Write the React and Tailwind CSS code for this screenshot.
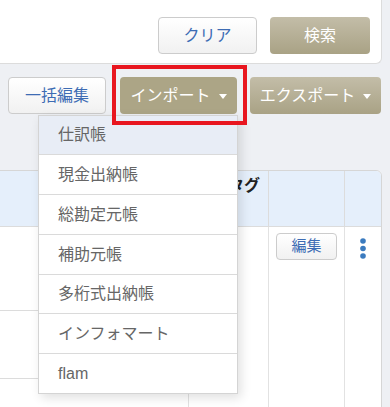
import React from "react";

const font = { fontFamily: '"Liberation Sans", "Noto Sans CJK JP", sans-serif' };

const items = [
  { label: "仕訳帳", h: "h-[39px]", active: true },
  { label: "現金出納帳", h: "h-[40px]" },
  { label: "総勘定元帳", h: "h-[40px]" },
  { label: "補助元帳", h: "h-[40px]" },
  { label: "多桁式出納帳", h: "h-[39px]" },
  { label: "インフォマート", h: "h-[40px]" },
  { label: "flam", h: "h-[39px]" },
];

const Caret = () => (
  <span className="inline-block w-0 h-0 border-l-[4px] border-r-[4px] border-t-[5px] border-l-transparent border-r-transparent border-t-white ml-[8px] mt-[2px]" />
);

const Dots = () => (
  <svg width="8" height="22" viewBox="0 0 8 22">
    <circle cx="4" cy="3" r="2.8" fill="#3b7bbf" />
    <circle cx="4" cy="10.5" r="2.8" fill="#3b7bbf" />
    <circle cx="4" cy="18" r="2.8" fill="#3b7bbf" />
  </svg>
);

const App = () => {
  const lightBtn =
    "flex items-center justify-center h-[37px] rounded-[4px] border border-[#cccccc] bg-gradient-to-b from-white to-[#f1f1f1] text-[16px] text-[#3d6cb4]";
  const oliveBtn =
    "flex items-center justify-center h-[37px] rounded-[4px] bg-gradient-to-b from-[#c3bda8] to-[#a9a285] text-[16px] text-white";

  return (
    <div className="relative w-[390px] h-[407px] overflow-hidden bg-[#eef0f4]" style={font}>
      {/* search panel */}
      <div className="w-[382px] h-[64px] bg-white border-r border-b border-[#dcdcdc] rounded-br-[6px] flex items-end justify-end gap-[13px] pr-[11px] pb-[9px]">
        <button className={`${lightBtn} w-[99px]`}>クリア</button>
        <button className={`${oliveBtn} w-[100px]`}>検索</button>
      </div>

      {/* action row */}
      <div className="flex mt-[13px] pl-[8px]">
        <button className={`${lightBtn} w-[98px]`}>一括編集</button>
        <button className="ml-[14px] flex items-center justify-center w-[117px] h-[37px] rounded-[4px] bg-[#aca586] text-[16px] text-white">
          インポート
          <Caret />
        </button>
        <button className={`${oliveBtn} ml-[13px] w-[131px]`}>
          エクスポート
          <Caret />
        </button>
      </div>

      {/* table */}
      <div className="mt-[56px] -ml-[10px] w-[392px] border border-[#d6d6d6] rounded-tr-[6px] bg-white overflow-hidden">
        <div className="flex h-[56px] bg-[#e5effb] border-b border-[#dcdcdc]">
          <div className="w-[197px]" />
          <div className="w-[80px] border-l border-[#dcdcdc] text-right pr-[8px] pt-[3px] text-[16px] leading-[24px] font-bold text-[#222]">
            タグ
          </div>
          <div className="w-[76px] border-l border-[#dcdcdc]" />
          <div className="w-[37px] border-l border-[#dcdcdc]" />
        </div>
        <div className="flex h-[190px]">
          <div className="w-[197px] flex flex-col">
            <div className="h-[84px] border-b border-[#dcdcdc]" />
            <div className="h-[68px] border-b border-[#dcdcdc]" />
            <div className="flex-1" />
          </div>
          <div className="w-[80px] border-l border-[#e2e2e2]" />
          <div className="w-[76px] border-l border-[#e2e2e2] pl-[7px] pt-[6px]">
            <button className="flex items-center justify-center w-[61px] h-[27px] rounded-[4px] border border-[#cccccc] bg-gradient-to-b from-white to-[#f1f1f1] text-[15px] text-[#3d6cb4]">
              編集
            </button>
          </div>
          <div className="w-[37px] border-l border-[#e2e2e2] flex justify-center pt-[11px]">
            <Dots />
          </div>
        </div>
      </div>

      {/* import dropdown */}
      <ul className="absolute left-[38px] top-[115px] w-[200px] bg-white border border-[#d4d4d4] shadow-[3px_4px_10px_rgba(0,0,0,0.12)] z-10">
        {items.map((item, i) => (
          <li
            key={item.label}
            className={`${item.h} flex items-center pl-[19px] text-[16px] text-[#666666] ${
              i < items.length - 1 ? "border-b border-[#dadada]" : ""
            } ${item.active ? "bg-[#e8edf6]" : ""}`}
          >
            {item.label}
          </li>
        ))}
      </ul>

      {/* highlight frame */}
      <div className="absolute left-[112px] top-[65px] w-[135px] h-[60px] border-[4px] border-[#e8161f] z-20" />
    </div>
  );
};

export default App;
